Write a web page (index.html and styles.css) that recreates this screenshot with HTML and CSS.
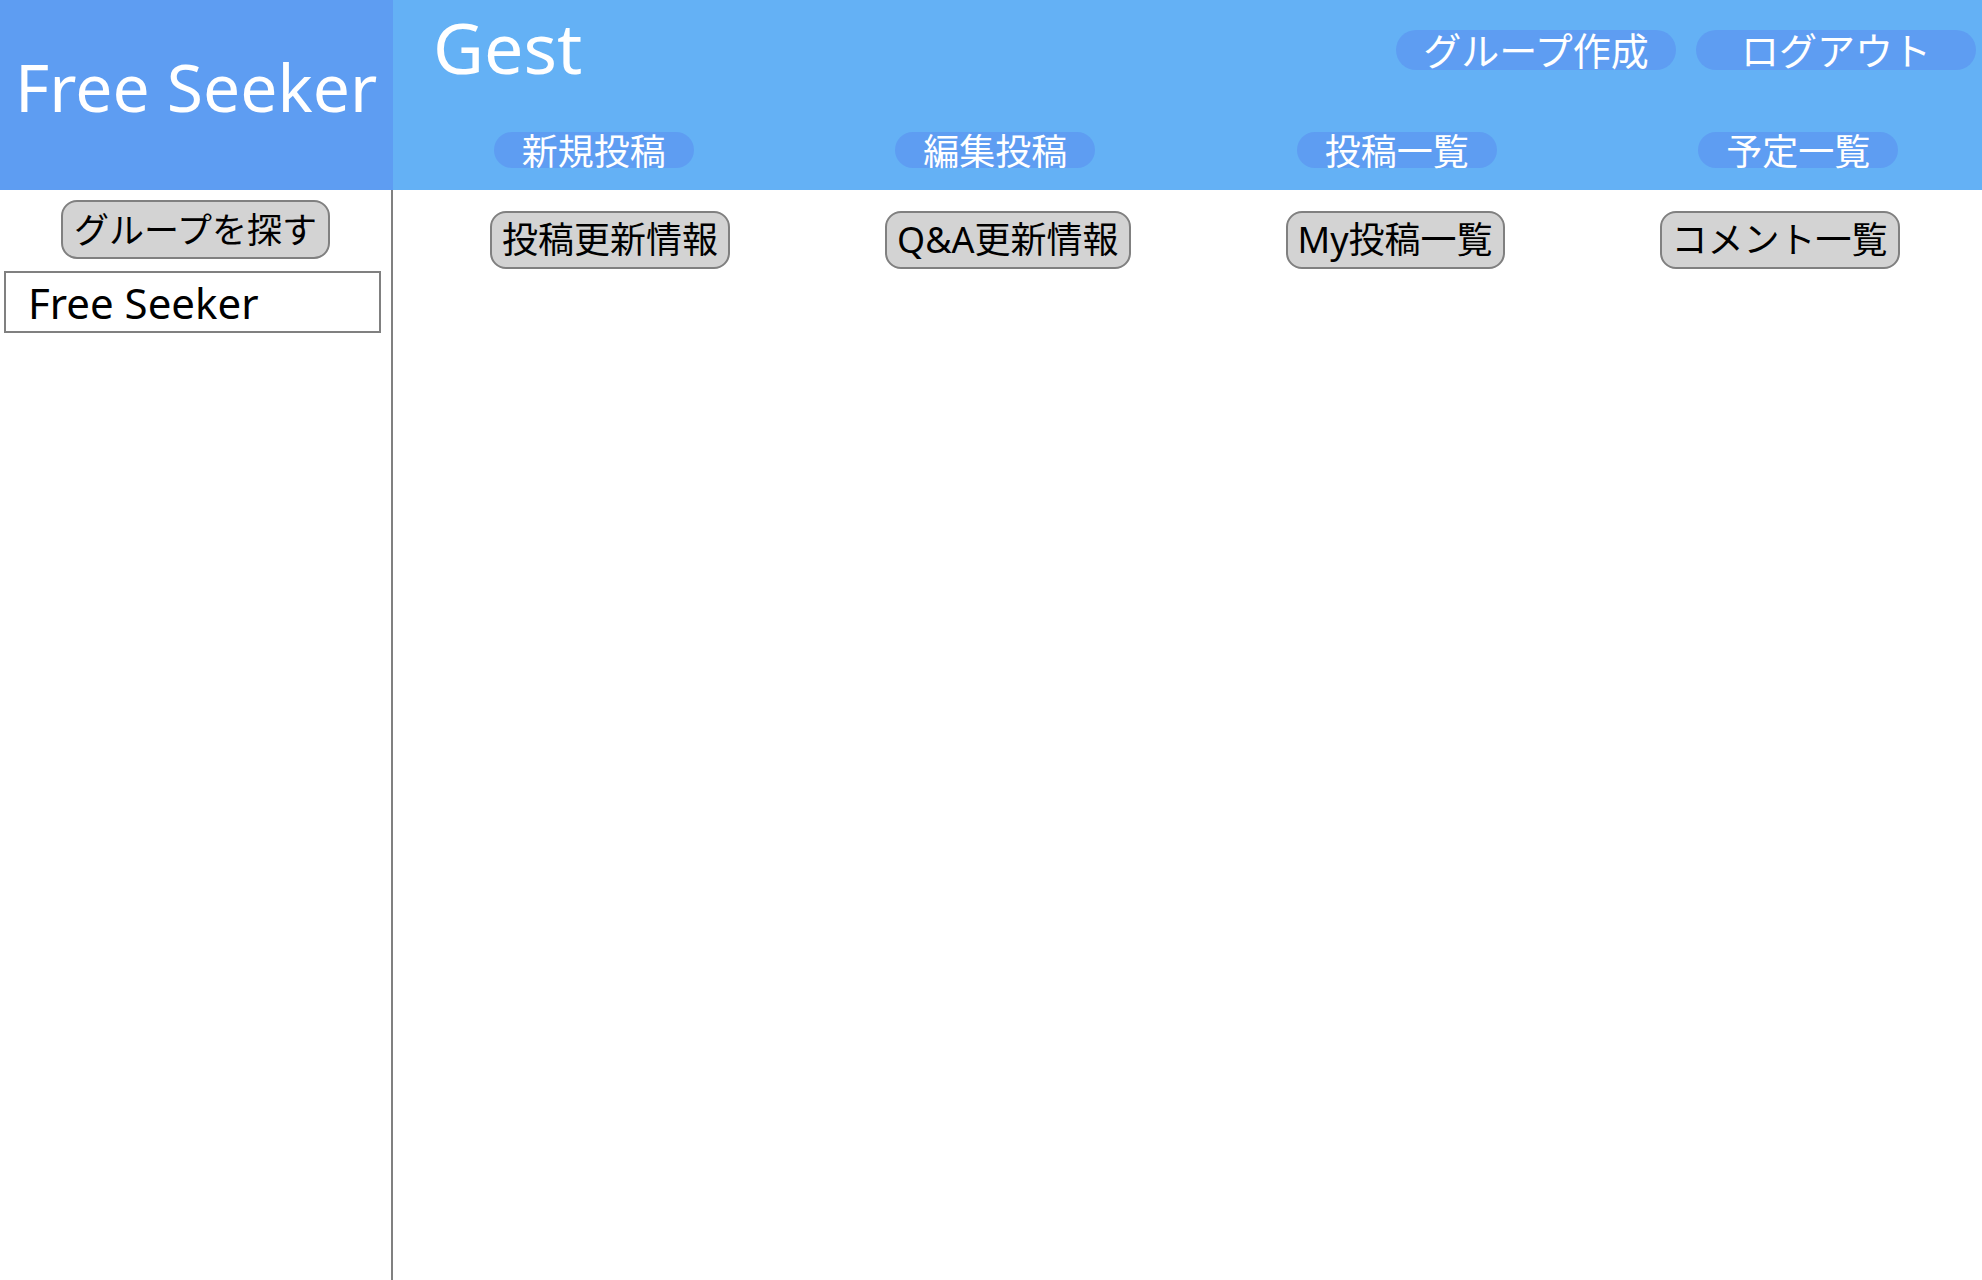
FILE: index.html
```html
<!DOCTYPE html>
<html lang="ja">
<head>
<meta charset="utf-8">
<title>Free Seeker</title>
<link rel="stylesheet" href="styles.css">
</head>
<body>
<div class="page">
  <div class="logo">Free Seeker</div>
  <header class="header">
    <div class="header-top">
      <h1 class="title">Gest</h1>
      <div class="account">
        <a class="pill pill-lg" href="#">グループ作成</a>
        <a class="pill pill-lg" href="#">ログアウト</a>
      </div>
    </div>
    <nav class="nav">
      <a class="pill pill-sm" href="#">新規投稿</a>
      <a class="pill pill-sm" href="#">編集投稿</a>
      <a class="pill pill-sm" href="#">投稿一覧</a>
      <a class="pill pill-sm" href="#">予定一覧</a>
    </nav>
  </header>
  <aside class="sidebar">
    <button class="btn btn-side" type="button">グループを探す</button>
    <input class="group-input" type="text" value="Free Seeker">
  </aside>
  <main class="main">
    <div class="tabs">
      <button class="btn" type="button">投稿更新情報</button>
      <button class="btn" type="button">Q&amp;A更新情報</button>
      <button class="btn" type="button">My投稿一覧</button>
      <button class="btn" type="button">コメント一覧</button>
    </div>
  </main>
</div>
</body>
</html>
```

FILE: styles.css
```css
* { box-sizing: border-box; }

html, body {
  margin: 0;
  height: 100%;
  background: #ffffff;
  font-family: "Noto Sans", "Noto Sans CJK JP", sans-serif;
  overflow: hidden;
}

.page {
  display: grid;
  grid-template-columns: 393px minmax(0, 1fr);
  grid-template-rows: 190px 1fr;
  height: 100vh;
}

.logo {
  background: #5e9df2;
  color: #ffffff;
  font-size: 66px;
  line-height: 1;
  display: flex;
  align-items: center;
  padding-left: 15px;
  padding-bottom: 18px;
  white-space: nowrap;
}

.header {
  background: #64b1f5;
  display: flex;
  flex-direction: column;
  min-width: 0;
}

.header-top {
  display: flex;
  justify-content: space-between;
  align-items: flex-start;
  height: 132px;
}

.title {
  margin: 0 0 0 40px;
  padding-top: 12px;
  font-size: 70px;
  line-height: 1;
  font-weight: normal;
  color: #ffffff;
}

.account {
  display: flex;
  gap: 20px;
  padding-top: 30px;
  padding-right: 6px;
}

.pill {
  display: flex;
  align-items: center;
  justify-content: center;
  background: #5e9df2;
  color: #ffffff;
  text-decoration: none;
  border-radius: 20px;
  white-space: nowrap;
}

.pill-lg {
  width: 280px;
  height: 40px;
  font-size: 38px;
  padding-bottom: 3px;
}

.pill-sm {
  width: 200px;
  height: 36px;
  font-size: 36px;
  border-radius: 18px;
  padding-bottom: 1px;
}

.nav {
  display: grid;
  grid-template-columns: repeat(4, 401.5px);
  justify-items: center;
}

.sidebar {
  border-right: 2px solid #808080;
  display: flex;
  flex-direction: column;
  align-items: center;
  padding-top: 10px;
}

.btn {
  font-family: "Noto Sans", "Noto Sans CJK JP", sans-serif;
  font-size: 36px;
  line-height: 50px;
  padding: 2px 10px;
  background: #d3d3d3;
  color: #000000;
  border: 2px solid #808080;
  border-radius: 16px;
  white-space: nowrap;
}

.btn-side {
  font-size: 35px;
  line-height: 51px;
  padding: 2px 11px;
}

.group-input {
  align-self: flex-start;
  margin: 12px 0 0 4px;
  width: 377px;
  height: 62px;
  padding: 0 22px;
  border: 2px solid #808080;
  font-family: "Noto Sans", "Noto Sans CJK JP", sans-serif;
  font-size: 42px;
  color: #000000;
  background: #ffffff;
}

.tabs {
  display: flex;
  padding: 21px 0 0 97px;
  gap: 155px;
}
```
